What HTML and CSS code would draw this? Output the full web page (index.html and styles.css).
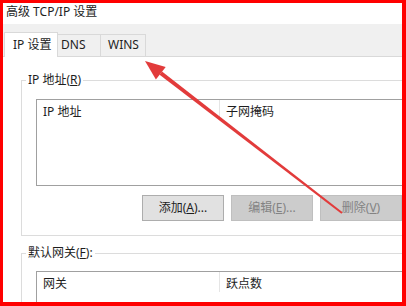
FILE: index.html
```html
<!DOCTYPE html>
<html lang="zh-CN">
<head>
<meta charset="utf-8">
<title>高级 TCP/IP 设置</title>
<link rel="stylesheet" href="styles.css">
</head>
<body>
<div class="frame">
  <div class="title">高级 TCP/IP 设置</div>
  <div class="tabs">
    <div class="tab active">IP 设置</div>
    <div class="tab dns">DNS</div>
    <div class="tab wins">WINS</div>
  </div>
  <div class="page">
    <fieldset class="group g1">
      <legend>IP 地址(<u>R</u>)</legend>
      <div class="gbody b1">
        <div class="list l1">
          <div class="lhead">
            <div class="col c1">IP 地址</div>
            <div class="col c2">子网掩码</div>
          </div>
        </div>
        <div class="btns">
          <div class="btn">添加(<u>A</u>)...</div>
          <div class="btn dis">编辑(<u>E</u>)...</div>
          <div class="btn dis">删除(<u>V</u>)</div>
        </div>
      </div>
    </fieldset>
    <fieldset class="group g2">
      <legend>默认网关(<u>F</u>):</legend>
      <div class="gbody b2">
        <div class="list l2">
          <div class="lhead">
            <div class="col c1">网关</div>
            <div class="col c2">跃点数</div>
          </div>
        </div>
      </div>
    </fieldset>
  </div>
</div>
<svg class="arrow" width="406" height="306" viewBox="0 0 406 306">
  <polygon points="342.6,212.2 341.4,213.8 159.6,74.8 162,71.6" fill="#e23b3b"/>
  <polygon points="145,61 165.7,66.9 155.9,79.5" fill="#e23b3b"/>
</svg>
</body>
</html>
```

FILE: styles.css
```css
* { box-sizing: border-box; }
body {
  margin: 0;
  font-family: "Noto Sans", "Noto Sans CJK SC", sans-serif;
  font-size: 12px;
  color: #1e1e1e;
}
.frame {
  width: 406px;
  height: 306px;
  border-style: solid;
  border-color: #ff0000;
  border-width: 3px 4px 4px 3px;
  overflow: hidden;
  background: #ffffff;
}
.title {
  height: 21px;
  padding: 1px 0 0 3px;
  line-height: 16px;
}
.tabs {
  display: flex;
  align-items: flex-end;
  height: 33px;
  background: #f0f0f0;
  border-bottom: 1px solid #d9d9d9;
  padding-left: 1px;
}
.tab {
  height: 22px;
  line-height: 20px;
  border-top: 1px solid #d9d9d9;
  border-right: 1px solid #d9d9d9;
  white-space: nowrap;
}
.tab.active {
  position: relative;
  width: 54px;
  height: 25px;
  margin-bottom: -1px;
  padding: 1px 0 0 8px;
  line-height: 22px;
  background: #ffffff;
  border-left: 1px solid #d9d9d9;
}
.tab.dns { width: 43px; padding-left: 3px; }
.tab.wins { width: 45px; padding-left: 7px; }
.page {
  padding: 16px 0 0 18px;
}
.group {
  margin: 0;
  padding: 0;
  width: 398px;
  min-width: 0;
  border: 1px solid #dcdcdc;
}
.group legend {
  margin-left: 4px;
  padding: 0 2px;
  line-height: 14px;
  font-size: 12px;
}
.g2 { margin-top: 10px; }
.gbody { padding: 12px 14px 14px; }
.b2 { padding-top: 11px; padding-bottom: 0; }
.list {
  height: 87px;
  border: 1px solid #a0a0a0;
}
.l2 { height: 60px; }
.lhead {
  display: flex;
  height: 20px;
}
.col {
  padding: 5px 0 0 6px;
  line-height: 14px;
  white-space: nowrap;
}
.c1 {
  width: 183px;
  border-right: 1px solid #e5e5e5;
}
.btns {
  display: flex;
  justify-content: flex-end;
  gap: 7px;
  margin-top: 9px;
  padding-right: 2px;
}
.btn {
  width: 82px;
  height: 26px;
  line-height: 24px;
  text-align: center;
  background: #e1e1e1;
  border: 1px solid #adadad;
  white-space: nowrap;
}
.btn.dis {
  background: #cccccc;
  border-color: #bfbfbf;
  color: #838383;
}
.arrow {
  position: absolute;
  left: 0;
  top: 0;
  pointer-events: none;
}
```
